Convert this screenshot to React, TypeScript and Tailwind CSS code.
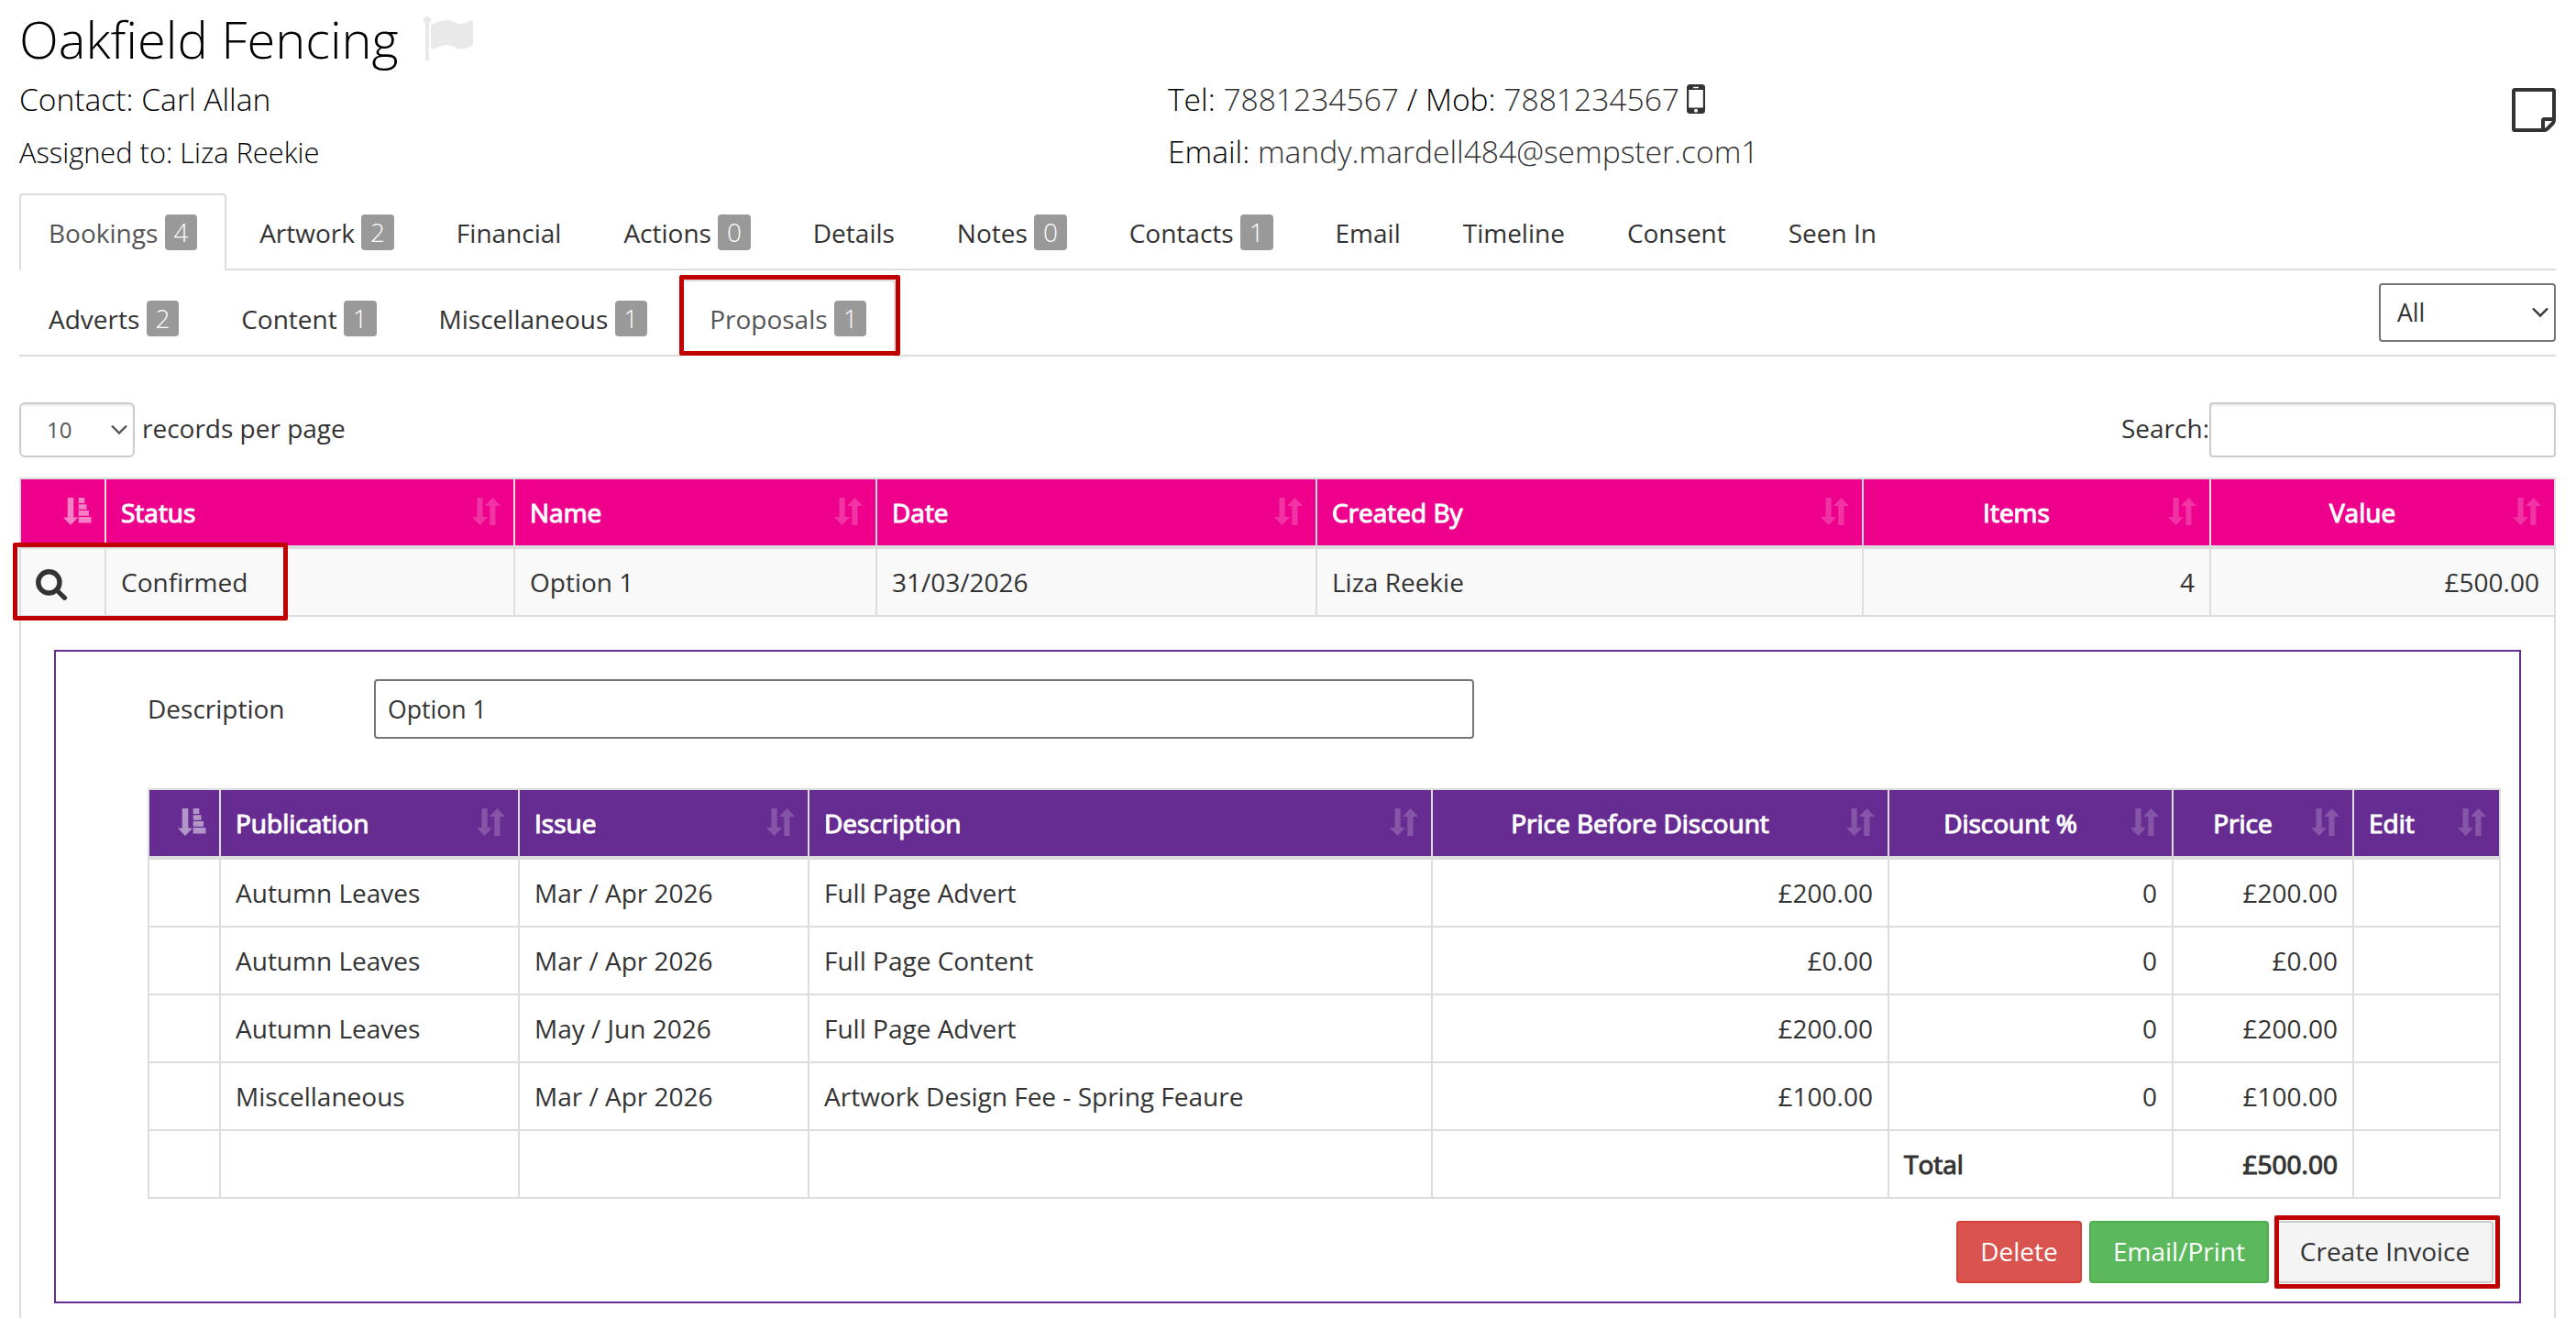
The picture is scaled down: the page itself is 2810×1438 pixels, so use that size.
import { useState } from 'react'

interface Tab {
  label: string
  count?: number
}

interface Column {
  label: string
  width: string
  align?: 'left' | 'center'
}

interface ProposalItem {
  publication: string
  issue: string
  description: string
  before: string
  discount: string
  price: string
}

const mainTabs: Tab[] = [
  { label: 'Bookings', count: 4 },
  { label: 'Artwork', count: 2 },
  { label: 'Financial' },
  { label: 'Actions', count: 0 },
  { label: 'Details' },
  { label: 'Notes', count: 0 },
  { label: 'Contacts', count: 1 },
  { label: 'Email' },
  { label: 'Timeline' },
  { label: 'Consent' },
  { label: 'Seen In' }
]

const bookingTabs: Tab[] = [
  { label: 'Adverts', count: 2 },
  { label: 'Content', count: 1 },
  { label: 'Miscellaneous', count: 1 },
  { label: 'Proposals', count: 1 }
]

const proposalColumns: Column[] = [
  { label: '', width: 'w-[95px]' },
  { label: 'Status', width: 'w-[446px]' },
  { label: 'Name', width: 'w-[395px]' },
  { label: 'Date', width: 'w-[480px]' },
  { label: 'Created By', width: 'w-[596px]' },
  { label: 'Items', width: 'w-[379px]', align: 'center' },
  { label: 'Value', width: 'w-[376px]', align: 'center' }
]

const itemColumns: Column[] = [
  { label: '', width: 'w-[80px]' },
  { label: 'Publication', width: 'w-[326px]' },
  { label: 'Issue', width: 'w-[316px]' },
  { label: 'Description', width: 'w-[680px]' },
  { label: 'Price Before Discount', width: 'w-[498px]', align: 'center' },
  { label: 'Discount %', width: 'w-[310px]', align: 'center' },
  { label: 'Price', width: 'w-[197px]', align: 'center' },
  { label: 'Edit', width: 'w-[160px]' }
]

const items: ProposalItem[] = [
  { publication: 'Autumn Leaves', issue: 'Mar / Apr 2026', description: 'Full Page Advert', before: '£200.00', discount: '0', price: '£200.00' },
  { publication: 'Autumn Leaves', issue: 'Mar / Apr 2026', description: 'Full Page Content', before: '£0.00', discount: '0', price: '£0.00' },
  { publication: 'Autumn Leaves', issue: 'May / Jun 2026', description: 'Full Page Advert', before: '£200.00', discount: '0', price: '£200.00' },
  { publication: 'Miscellaneous', issue: 'Mar / Apr 2026', description: 'Artwork Design Fee - Spring Feaure', before: '£100.00', discount: '0', price: '£100.00' }
]

const cell = 'h-[74px] border-r-2 border-b-2 border-[#ddd] px-4 py-0'

const FlagIcon = () => (
  <svg className="h-14 w-14" viewBox="0 0 1792 1792" fill="#e9e9e9">
    <path d="M320 256q0 72-64 110v1266q0 13-9.5 22.5t-22.5 9.5h-64q-13 0-22.5-9.5t-9.5-22.5v-1266q-64-38-64-110 0-53 37.5-90.5t90.5-37.5 90.5 37.5 37.5 90.5zm1472 64v763q0 25-12.5 38.5t-39.5 27.5q-215 116-369 116-61 0-123.5-22t-108.5-48-115.5-48-142.5-22q-192 0-464 146-17 9-33 9-26 0-45-19t-19-45v-742q0-32 31-55 21-14 79-43 236-120 421-120 107 0 200 29t219 88q38 19 88 19 54 0 117.5-21t110-47 88-47 54.5-21q26 0 45 19t19 45z" />
  </svg>
)

const NoteIcon = () => (
  <svg className="h-12 w-12" viewBox="0 128 1536 1536" fill="#333">
    <path d="M1400 1280h-248v248q29-10 41-22l185-185q12-12 22-41zm-280-128h288v-896h-1280v1280h896v-288q0-40 28-68t68-28zm416-928v1024q0 40-20 88t-48 76l-184 184q-28 28-76 48t-88 20h-1024q-40 0-68-28t-28-68v-1344q0-40 28-68t68-28h1344q40 0 68 28t28 68z" />
  </svg>
)

const PhoneIcon = () => (
  <svg className="h-8 w-5" viewBox="0 0 20 32">
    <rect width="20" height="32" rx="3.5" fill="#333" />
    <rect x="2.2" y="6" width="15.6" height="19.500" fill="#fff" />
    <rect x="7" y="2.800" width="6" height="1.400" rx="0.7" fill="#fff" />
    <circle cx="10" cy="28.800" r="2" fill="#fff" />
  </svg>
)

const SearchIcon = () => (
  <svg className="h-10 w-9" viewBox="0 0 36 40" fill="none" stroke="#333">
    <circle cx="14.4" cy="20.4" r="11.6" strokeWidth="5.4" />
    <path d="M23.500 29.500l8 7.800" strokeWidth="5.2" strokeLinecap="round" />
  </svg>
)

const SortIcon = () => (
  <svg className="h-[30px] w-[31px] opacity-20" viewBox="0 0 31 30" fill="#fff">
    <path d="M5.500 0h6.200v21h5.300l-8.400 9-8.600-9h5.500z" />
    <path d="M19.300 30h6.200v-21h5.500l-8.500-9-8.500 9h5.300z" />
  </svg>
)

const SortAscIcon = () => (
  <svg className="h-[30px] w-[31px] opacity-50" viewBox="0 0 31 30" fill="#fff">
    <path d="M4.700 0h6.600v21.500h4.700l-8 8.500-8-8.500h4.700z" />
    <path d="M16.700 0h6.600v6h-6.600zM16.700 7.200h8.800v5.600h-8.800zM16.700 14h11.300v5.700h-11.300zM16.700 21h13.800v6.600h-13.800z" />
  </svg>
)

const Chevron = () => (
  <svg className="h-3 w-[18px]" viewBox="0 0 18 12" fill="none" stroke="currentColor" strokeWidth="2.4">
    <path d="M1 1.500l8 8 8-8" />
  </svg>
)

// Red frame that marks an area of interest
const Highlight = ({ className }: { className: string }) => (
  <div className={`pointer-events-none absolute z-10 rounded-[2px] border-[5px] border-[#c00000] ${className}`} />
)

const TabBar = ({ tabs, active, onSelect }: { tabs: Tab[]; active: string; onSelect: (label: string) => void }) => (
  <>
    {tabs.map((tab) => (
      <button
        key={tab.label}
        onClick={() => onSelect(tab.label)}
        className={`mr-1 flex h-[84px] items-center gap-[7.300px] rounded-t-[4px] border-2 border-b-0 px-[30px] pb-px ${
          active === tab.label ? 'border-[#ddd] bg-white text-[#555]' : 'border-transparent'
        }`}
      >
        {tab.label}
        {tab.count !== undefined && (
          <span className="h-[39px] rounded-[4px] bg-[#999] px-[9.800px] leading-[39px] font-light text-white">
            {tab.count}
          </span>
        )}
      </button>
    ))}
  </>
)

const TableHead = ({ columns, color }: { columns: Column[]; color: string }) => (
  <thead>
    <tr className={color}>
      {columns.map((col, i) => (
        <th
          key={i}
          className={`relative h-[78px] border-t-2 border-r-2 border-b-4 border-[#ddd] py-0 pr-[60px] pl-4 font-normal text-white [-webkit-text-stroke:1.1px_white] first:border-l-2 ${col.width} ${
            col.align === 'center' ? 'text-center' : 'text-left'
          }`}
        >
          {col.label}
          <span className="absolute right-[14px] bottom-[22px]">{i === 0 ? <SortAscIcon /> : <SortIcon />}</span>
        </th>
      ))}
    </tr>
  </thead>
)

const App = () => {
  const [tab, setTab] = useState('Bookings')
  const [bookingTab, setBookingTab] = useState('Proposals')
  const [search, setSearch] = useState('')
  const [description, setDescription] = useState('Option 1')

  return (
    <div className="h-[1438px] w-[2810px] overflow-hidden bg-white pr-[22px] pl-[21px] font-['Open_Sans',sans-serif] text-[28px] leading-[40px] text-[#333]">
      <header className="flex h-[211px] font-light text-black">
        <div className="w-[1253px]">
          <div className="flex h-[84px] items-center gap-[25px] text-[56px] leading-[84px]">
            <h1>Oakfield Fencing</h1>
            <FlagIcon />
          </div>
          <p className="pt-[2px] text-[33.600px] leading-[44px]">Contact: Carl Allan</p>
          <p className="pt-[14px] text-[30.800px] leading-[44px]">Assigned to: Liza Reekie</p>
        </div>
        <div className="flex-1 pt-[86px] text-[33.600px] leading-[44px]">
          <p className="flex items-center gap-2">
            <span>
              Tel: <span className="text-[#333]">7881234567</span> / Mob: <span className="text-[#333]">7881234567</span>
            </span>
            <PhoneIcon />
          </p>
          <p className="pt-[13px]">
            Email: <span className="text-[#333]">mandy.mardell484@sempster.com1</span>
          </p>
        </div>
        <div className="pt-24">
          <NoteIcon />
        </div>
      </header>

      <nav className="flex h-[84px] border-b-2 border-[#ddd]">
        <TabBar tabs={mainTabs} active={tab} onSelect={setTab} />
      </nav>

      <nav className="relative flex h-[94px] items-start border-b-2 border-[#ddd] pt-[10px]">
        <TabBar tabs={bookingTabs} active={bookingTab} onSelect={setBookingTab} />
        <button className="mt-1 ml-auto flex h-16 w-[193px] items-center justify-between rounded-[4px] border-2 border-[#767676] pr-[6px] pl-[18px] text-[26.670px]">
          All
          <Chevron />
        </button>
        <Highlight className="top-[5px] left-[720px] h-[88px] w-[241px]" />
      </nav>

      <div className="flex h-[132px] items-start justify-between pt-[50px]">
        <label className="flex items-center gap-2">
          <span className="flex h-[60px] w-[126px] items-center justify-between rounded-[6px] border-2 border-[#ccc] pr-[6px] pl-7 text-[24px] text-[#555] shadow-[inset_0_2px_2px_rgba(0,0,0,0.075)]">
            10
            <Chevron />
          </span>
          <span className="-mt-1">records per page</span>
        </label>
        <label className="flex items-center">
          <span className="-mt-1">Search:</span>
          <input
            value={search}
            onChange={(e) => setSearch(e.target.value)}
            className="h-[60px] w-[378px] rounded-[4px] border-2 border-[#ccc] px-4 shadow-[inset_0_2px_2px_rgba(0,0,0,0.075)] focus:outline-none"
          />
        </label>
      </div>

      <div className="relative">
        <table className="w-[2767px] table-fixed border-separate border-spacing-0">
          <TableHead columns={proposalColumns} color="bg-[#ee008c]" />
          <tbody>
            <tr className="bg-[#f9f9f9]">
              <td className="h-[74px] border-r-2 border-b-2 border-l-2 border-[#ddd] p-0 pl-4">
                <SearchIcon />
              </td>
              <td className={cell}>Confirmed</td>
              <td className={cell}>Option 1</td>
              <td className={cell}>31/03/2026</td>
              <td className={cell}>Liza Reekie</td>
              <td className={`${cell} text-right`}>4</td>
              <td className={`${cell} text-right`}>£500.00</td>
            </tr>
          </tbody>
        </table>
        <Highlight className="top-[71px] -left-[7px] h-[85px] w-[300px]" />
      </div>

      <div className="h-[765px] border-x-2 border-[#ddd] px-9 pt-9">
        <div className="h-[713px] border-2 border-[#662c91] pt-[30px] pl-[100px]">
          <div className="flex h-[65px] items-center">
            <span className="-mt-[2px] w-[247px]">Description</span>
            <input
              value={description}
              onChange={(e) => setDescription(e.target.value)}
              className="h-[65px] w-[1200px] rounded-[4px] border-2 border-[#767676] px-[13px] pb-px text-[26.670px] focus:outline-none"
            />
          </div>

          <table className="mt-[54px] w-[2567px] table-fixed border-separate border-spacing-0">
            <TableHead columns={itemColumns} color="bg-[#662c91]" />
            <tbody>
              {items.map((item, i) => (
                <tr key={i}>
                  <td className={`${cell} border-l-2`} />
                  <td className={cell}>{item.publication}</td>
                  <td className={cell}>{item.issue}</td>
                  <td className={cell}>{item.description}</td>
                  <td className={`${cell} text-right`}>{item.before}</td>
                  <td className={`${cell} text-right`}>{item.discount}</td>
                  <td className={`${cell} text-right`}>{item.price}</td>
                  <td className={cell} />
                </tr>
              ))}
              <tr className="[-webkit-text-stroke:1.1px_#333]">
                <td className={`${cell} border-l-2`} />
                <td className={cell} />
                <td className={cell} />
                <td className={cell} />
                <td className={cell} />
                <td className={cell}>Total</td>
                <td className={`${cell} text-right`}>£500.00</td>
                <td className={cell} />
              </tr>
            </tbody>
          </table>

          <div className="relative mt-6 mr-7 flex justify-end gap-2">
            <button className="h-[68px] w-[137px] rounded-[4px] border-2 border-[#d43f3a] bg-[#d9534f] pb-0.5 text-white">Delete</button>
            <button className="h-[68px] w-[196px] rounded-[4px] border-2 border-[#4cae4c] bg-[#5cb85c] pb-0.5 text-white">Email/Print</button>
            <button className="h-[68px] w-[237px] rounded-[4px] border-2 border-[#ccc] bg-[#f4f4f4] pb-0.5">Create Invoice</button>
            <Highlight className="-top-[6px] -right-[7px] h-[80px] w-[246px]" />
          </div>
        </div>
      </div>
    </div>
  )
}

export default App
